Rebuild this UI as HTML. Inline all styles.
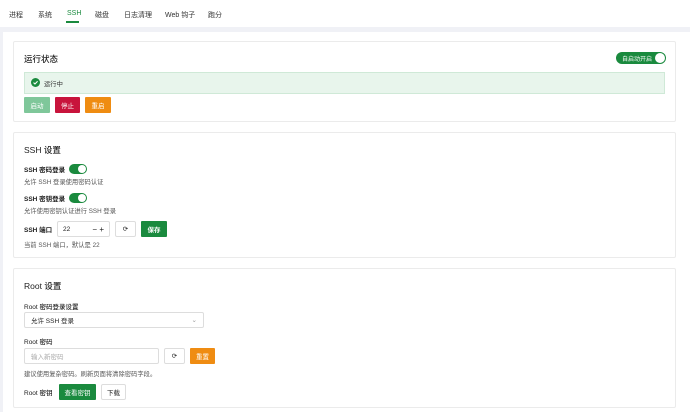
<!DOCTYPE html><html><head><meta charset="utf-8"><style>
*{box-sizing:border-box;margin:0;padding:0}
body{width:690px;height:403px;overflow:hidden;background:#f0f1f6;font-family:"Liberation Sans","Noto Sans CJK SC",sans-serif;color:#222;position:relative;font-size:7px}
.a{position:absolute}
.nav{left:0;top:0;width:690px;height:27px;background:#fff}
.nav span{position:absolute;top:10px;font-size:7px;color:#333}
.panel{left:3px;top:32px;width:690px;height:380px;background:#fff}
.card{position:absolute;left:13px;width:663px;border:1px solid #ebebeb;border-radius:2px;background:#fff}
.t{font-size:8.5px;font-weight:500;color:#222}
.l{font-size:6.5px;font-weight:600;color:#222}
.d{font-size:6.3px;color:#555}
.btn{position:absolute;height:16px;font-size:6.5px;color:#fff;display:flex;align-items:center;justify-content:center;border-radius:1px}
.ob{position:absolute;height:16px;border:1px solid #ddd;border-radius:2px;background:#fff;font-size:6.5px;display:flex;align-items:center;justify-content:center}
.tg{position:absolute;width:18px;height:10px;border-radius:5px;background:#1a8a3e}
.tg:after{content:"";position:absolute;right:1px;top:1px;width:8px;height:8px;border-radius:50%;background:#fff}
</style></head><body>
<div class="a nav">
<span style="left:9px">进程</span><span style="left:38px">系统</span>
<span style="left:67px;color:#1a8a3e">SSH</span>
<div class="a" style="left:66px;top:21px;width:13px;height:1.5px;background:#1a8a3e"></div>
<span style="left:95px">磁盘</span><span style="left:124px">日志清理</span><span style="left:165px">Web 钩子</span><span style="left:208px">跑分</span>
</div>
<div class="a panel"></div>

<div class="card" style="top:41px;height:81px">
<div class="a t" style="left:10px;top:11px">运行状态</div>
<div class="a" style="left:602px;top:10px;width:50px;height:12px;border-radius:6px;background:#1a8a3e;color:#fff;font-size:6px;padding:2px 0 0 6px">自启动开启</div>
<div class="a" style="left:641px;top:11px;width:10px;height:10px;border-radius:50%;background:#fff"></div>
<div class="a" style="left:10px;top:30px;width:641px;height:22px;background:#e8f5ec;border:1px solid #cfe9d7"></div>
<svg class="a" style="left:17px;top:36px" width="9" height="9" viewBox="0 0 10 10"><circle cx="5" cy="5" r="5" fill="#1a8a3e"/><path d="M2.8 5.1L4.4 6.6 7.3 3.6" stroke="#fff" stroke-width="1.2" fill="none"/></svg>
<div class="a d" style="left:30px;top:37px;color:#333">运行中</div>
<div class="btn" style="left:10px;top:55px;width:26px;background:#7fc79a">启动</div>
<div class="btn" style="left:41px;top:55px;width:25px;background:#c8143c">停止</div>
<div class="btn" style="left:71px;top:55px;width:26px;background:#ef8c12">重启</div>
</div>

<div class="card" style="top:132px;height:126px">
<div class="a t" style="left:10px;top:11px">SSH 设置</div>
<div class="a l" style="left:10px;top:31px">SSH 密码登录</div><div class="tg" style="left:55px;top:31px"></div>
<div class="a d" style="left:10px;top:44px">允许 SSH 登录使用密码认证</div>
<div class="a l" style="left:10px;top:60px">SSH 密钥登录</div><div class="tg" style="left:55px;top:60px"></div>
<div class="a d" style="left:10px;top:73px">允许使用密钥认证进行 SSH 登录</div>
<div class="a l" style="left:10px;top:91px">SSH 端口</div>
<div class="ob" style="left:43px;top:88px;width:53px;justify-content:flex-start;padding-left:5px">22<span style="position:absolute;right:5px;font-size:8px">− +</span></div>
<div class="ob" style="left:101px;top:88px;width:21px">⟳</div>
<div class="btn" style="left:127px;top:88px;width:26px;background:#1a8a3e;font-weight:600">保存</div>
<div class="a d" style="left:10px;top:107px">当前 SSH 端口，默认是 22</div>
</div>

<div class="card" style="top:268px;height:140px">
<div class="a t" style="left:10px;top:11px">Root 设置</div>
<div class="a l" style="left:10px;top:32px;font-weight:500">Root 密码登录设置</div>
<div class="ob" style="left:10px;top:43px;width:180px;justify-content:flex-start;padding-left:6px">允许 SSH 登录<span style="position:absolute;right:6px;color:#999">⌄</span></div>
<div class="a l" style="left:10px;top:67px;font-weight:500">Root 密码</div>
<div class="ob" style="left:10px;top:79px;width:135px;justify-content:flex-start;padding-left:6px;color:#aaa">输入新密码</div>
<div class="ob" style="left:150px;top:79px;width:21px">⟳</div>
<div class="btn" style="left:176px;top:79px;width:25px;background:#ef8c12">重置</div>
<div class="a d" style="left:10px;top:100px">建议使用复杂密码。刷新页面将清除密码字段。</div>
<div class="a l" style="left:10px;top:118px;font-weight:500">Root 密钥</div>
<div class="btn" style="left:45px;top:115px;width:37px;background:#1a8a3e">查看密钥</div>
<div class="ob" style="left:87px;top:115px;width:25px">下载</div>
</div>
</body></html>
